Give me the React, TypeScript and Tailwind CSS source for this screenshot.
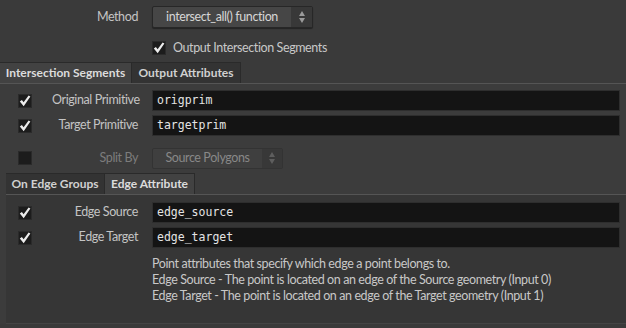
import React from 'react';

const font = { fontFamily: 'Lato, "Noto Sans", sans-serif' };

function Check({ on = true }: { on?: boolean }) {
  return (
    <div className="w-[14px] h-[14px] bg-[#1c1c1c] border border-[#2a2a2a] flex items-center justify-center">
      {on && (
        <svg width="12" height="12" viewBox="0 0 12 12">
          <path d="M0.8 6.4 L2.9 4.9 L4.6 7.2 L9.6 0.6 L11.4 1.6 L4.7 11.2 Z" fill="#ececec" />
        </svg>
      )}
    </div>
  );
}

function Arrows({ dim = false }: { dim?: boolean }) {
  const c = dim ? '#5e5e5e' : '#9a9a9a';
  return (
    <svg width="8" height="14" viewBox="0 0 8 14">
      <path d="M4 1 L7 6 L1 6 Z" fill={c} />
      <path d="M1 8 L7 8 L4 13 Z" fill={c} />
    </svg>
  );
}

function Field({ value }: { value: string }) {
  return (
    <div
      className="flex-1 h-[21px] bg-[#141414] border border-[#2e2e2e] pl-[4px] flex items-center text-[11.5px] tracking-normal text-[#e4e4e4]"
      style={{ fontFamily: '"DejaVu Sans Mono", monospace' }}
    >
      {value}
    </div>
  );
}

function Row({ label, value }: { label: string; value: string }) {
  return (
    <div className="flex items-center h-[25px] pr-[6px]">
      <div className="w-[52px] pl-[18px]">
        <Check />
      </div>
      <div className="w-[86px] text-right whitespace-nowrap text-[#c4c4c4]">{label}</div>
      <div className="w-[14px]" />
      <Field value={value} />
    </div>
  );
}

function Tab({ label, active, w }: { label: string; active?: boolean; w: string }) {
  return (
    <div
      className={`${w} h-[21px] flex items-center justify-center text-[12px] tracking-normal font-bold border-t border-r border-[#2a2a2a] ${
        active ? 'bg-[#424242] text-[#dcdcdc]' : 'bg-[#333333] text-[#d0d0d0]'
      }`}
    >
      {label}
    </div>
  );
}

export default function App() {
  return (
    <div
      className="w-[626px] h-[328px] bg-[#3a3a3a] overflow-hidden pt-[6px] text-[12.5px] tracking-[-0.4px] leading-none"
      style={font}
    >
      {/* Method */}
      <div className="flex items-center h-[22px]">
        <div className="w-[138px] text-right text-[#c4c4c4]">Method</div>
        <div className="w-[14px]" />
        <div className="w-[161px] h-[22px] flex bg-[#464646] border border-[#272727] rounded-[2px] shadow-[0_1px_1px_rgba(0,0,0,0.4)]">
          <div className="flex-1 flex items-center justify-center text-[#d6d6d6]">
            intersect_all() function
          </div>
          <div className="w-[21px] bg-[#383838] flex items-center justify-center">
            <Arrows />
          </div>
        </div>
      </div>

      <div className="flex items-center h-[16px] mt-[12px] pl-[152px] gap-[7px]">
        <Check />
        <span className="text-[#c8c8c8]">Output Intersection Segments</span>
      </div>

      {/* tabs 1 */}
      <div className="flex mt-[6px]">
        <Tab label="Intersection Segments" active w="w-[132px]" />
        <Tab label="Output Attributes" w="w-[109px]" />
      </div>
      <div className="bg-[#3c3c3c] border-t border-[#555555] pt-[4px]">
        <Row label="Original Primitive" value="origprim" />
        <Row label="Target Primitive" value="targetprim" />
        <div className="flex items-center h-[24px] mt-[8px]">
          <div className="w-[52px] pl-[18px]">
            <Check on={false} />
          </div>
          <div className="w-[86px] text-right text-[#7c7c7c]">Split By</div>
          <div className="w-[14px]" />
          <div className="w-[131px] h-[21px] flex bg-[#3f3f3f] border border-[#333333] rounded-[2px]">
            <div className="flex-1 flex items-center justify-center text-[#888888]">
              Source Polygons
            </div>
            <div className="w-[20px] bg-[#383838] flex items-center justify-center">
              <Arrows dim />
            </div>
          </div>
        </div>

        {/* tabs 2 */}
        <div className="pl-[6px] mt-[3px]">
          <div className="flex">
            <Tab label="On Edge Groups" w="w-[99px]" />
            <Tab label="Edge Attribute" active w="w-[90px]" />
          </div>
          <div className="bg-[#363636] border-t border-[#555555] border-b border-b-[#444444] h-[130px] pt-[5px]">
            <div className="-ml-[6px]">
              <Row label="Edge Source" value="edge_source" />
              <Row label="Edge Target" value="edge_target" />
            </div>
            <div className="pl-[146px] mt-[6px] leading-[16px] text-[#c8c8c8]">
              <div>Point attributes that specify which edge a point belongs to.</div>
              <div>Edge Source - The point is located on an edge of the Source geometry (Input 0)</div>
              <div>Edge Target - The point is located on an edge of the Target geometry (Input 1)</div>
            </div>
          </div>
        </div>
      </div>
    </div>
  );
}
